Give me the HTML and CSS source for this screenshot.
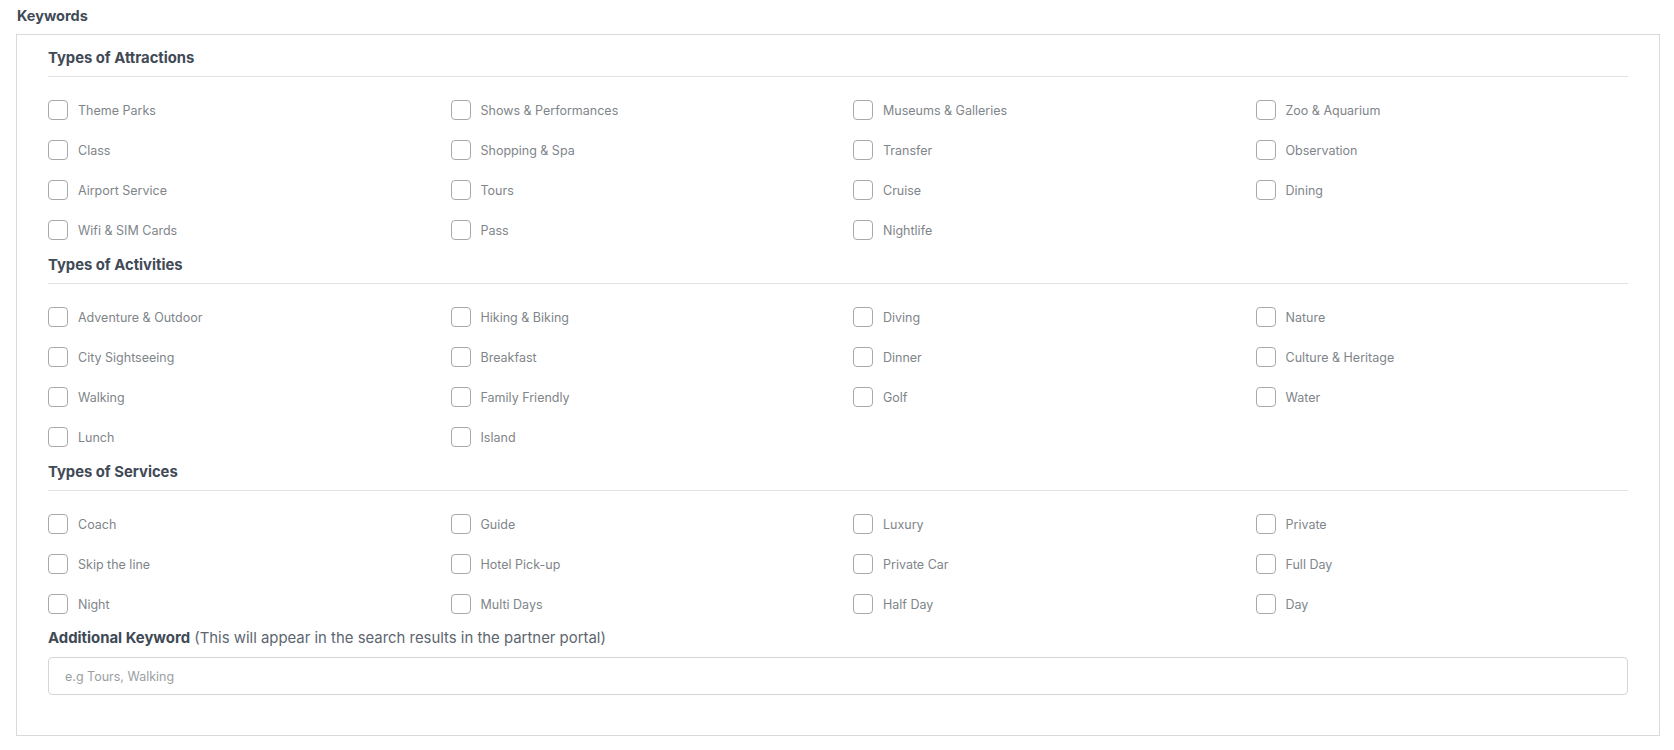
FILE: index.html
```html
<!DOCTYPE html>
<html lang="en">
<head>
    <meta charset="UTF-8">
    <meta name="viewport" content="width=device-width, initial-scale=1.0">
    <title>Keywords</title>
    <link rel="stylesheet" href="styles.css">
</head>
<body>

<label class="field-label">Keywords</label>
<div class="keyword-box">

    <!-- Attractions -->
    <div class="section">
        <h4 class="section-title">Types of Attractions</h4>
        <ul class="options">
            <li><input type="checkbox"> Theme Parks</li>
            <li><input type="checkbox"> Shows &amp; Performances</li>
            <li><input type="checkbox"> Museums &amp; Galleries</li>
            <li><input type="checkbox"> Zoo &amp; Aquarium</li>
            <li><input type="checkbox"> Class</li>
            <li><input type="checkbox"> Shopping &amp; Spa</li>
            <li><input type="checkbox"> Transfer</li>
            <li><input type="checkbox"> Observation</li>
            <li><input type="checkbox"> Airport Service</li>
            <li><input type="checkbox"> Tours</li>
            <li><input type="checkbox"> Cruise</li>
            <li><input type="checkbox"> Dining</li>
            <li><input type="checkbox"> Wifi &amp; SIM Cards</li>
            <li><input type="checkbox"> Pass</li>
            <li><input type="checkbox"> Nightlife</li>
        </ul>
    </div>

    <!-- Activities -->
    <div class="section">
        <h4 class="section-title">Types of Activities</h4>
        <ul class="options">
            <li><input type="checkbox"> Adventure &amp; Outdoor</li>
            <li><input type="checkbox"> Hiking &amp; Biking</li>
            <li><input type="checkbox"> Diving</li>
            <li><input type="checkbox"> Nature</li>
            <li><input type="checkbox"> City Sightseeing</li>
            <li><input type="checkbox"> Breakfast</li>
            <li><input type="checkbox"> Dinner</li>
            <li><input type="checkbox"> Culture &amp; Heritage</li>
            <li><input type="checkbox"> Walking</li>
            <li><input type="checkbox"> Family Friendly</li>
            <li><input type="checkbox"> Golf</li>
            <li><input type="checkbox"> Water</li>
            <li><input type="checkbox"> Lunch</li>
            <li><input type="checkbox"> Island</li>
        </ul>
    </div>

    <!-- Services -->
    <div class="section">
        <h4 class="section-title">Types of Services</h4>
        <ul class="options">
            <li><input type="checkbox"> Coach</li>
            <li><input type="checkbox"> Guide</li>
            <li><input type="checkbox"> Luxury</li>
            <li><input type="checkbox"> Private</li>
            <li><input type="checkbox"> Skip the line</li>
            <li><input type="checkbox"> Hotel Pick-up</li>
            <li><input type="checkbox"> Private Car</li>
            <li><input type="checkbox"> Full Day</li>
            <li><input type="checkbox"> Night</li>
            <li><input type="checkbox"> Multi Days</li>
            <li><input type="checkbox"> Half Day</li>
            <li><input type="checkbox"> Day</li>
        </ul>
    </div>

    <div class="section extra">
        <label class="extra-label"><b>Additional Keyword</b> (This will appear in the search results in the partner portal)</label>
        <input type="text" class="text-input" placeholder="e.g Tours, Walking">
    </div>
</div>

</body>
</html>
```

FILE: styles.css
```css
body {
    font-family: Inter, "Noto Sans", sans-serif;
    margin: 0;
    padding: 6px 14px 20px 16px;
    background-color: #fff;
    color: #3f4a56;
}
.field-label {
    display: block;
    font-size: 14.5px;
    font-weight: 700;
    line-height: 20px;
    margin-left: 1px;
    margin-bottom: 8px;
}
.keyword-box {
    border: 1px solid #d9d9d9;
    padding: 8px 31px 40px 31px;
}
.section {
    padding-top: 5px;
}
.section-title {
    margin: 0;
    font-size: 14.8px;
    font-weight: 700;
    line-height: 20px;
    padding-bottom: 8px;
    border-bottom: 1px solid #e3e3e3;
}
.options {
    list-style: none;
    margin: 13px 0 0 0;
    padding: 0;
    display: grid;
    grid-template-columns: repeat(4, 1fr);
    column-gap: 30px;
}
.options li {
    height: 40px;
    display: flex;
    align-items: center;
    font-size: 12.5px;
    color: #80858a;
}
.options input[type="checkbox"] {
    appearance: none;
    -webkit-appearance: none;
    width: 20px;
    height: 20px;
    margin: 0 10px 0 0;
    border: 1px solid #a9a9a9;
    border-radius: 4px;
    background: #fff;
}
.extra {
    padding-top: 4px;
}
.extra-label {
    display: block;
    font-size: 14.9px;
    line-height: 20px;
    color: #5d6670;
    margin-bottom: 9px;
}
.extra-label b {
    color: #3f4a56;
}
.text-input {
    display: block;
    box-sizing: border-box;
    width: 100%;
    height: 38px;
    padding: 0 16px;
    border: 1px solid #d6d6d6;
    border-radius: 4px;
    font-family: inherit;
    font-size: 12.5px;
}
.text-input::placeholder {
    color: #9a9ea3;
}
```
